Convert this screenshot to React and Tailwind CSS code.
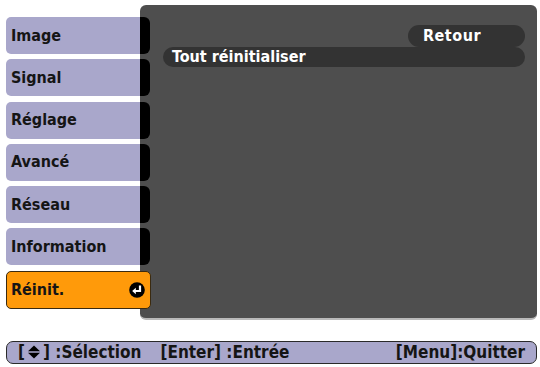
const tabs = ["Image", "Signal", "Réglage", "Avancé", "Réseau", "Information"];

function EnterIcon() {
  return (
    <svg width="16" height="16" viewBox="0 0 16 16">
      <circle cx="8" cy="8" r="7.8" fill="#000" />
      <path d="M11 3.5 V9 H6" stroke="#fff" strokeWidth="2.2" fill="none" />
      <path d="M3.2 9 L6.8 5.8 V12.2 Z" fill="#fff" />
    </svg>
  );
}

function UpDown() {
  return (
    <svg width="14" height="14" viewBox="0 0 14 14" className="inline-block mx-[2px] -mt-[2px]">
      <path d="M7 0.5 L13 6.3 H1 Z" fill="#000" />
      <path d="M1 7.7 H13 L7 13.5 Z" fill="#000" />
    </svg>
  );
}

export default function App() {
  return (
    <div className="w-[540px] h-[367px] bg-white font-['DejaVu_Sans_Condensed','DejaVu_Sans',sans-serif] font-stretch-condensed overflow-hidden">
      <div className="flex pt-[5px] pl-[6px] pr-[3px] h-[320px]">
        {/* Tabs */}
        <div className="w-[134px] shrink-0 pt-[12px] flex flex-col gap-[5.3px]">
          {tabs.map((t) => (
            <div
              key={t}
              className="h-[37px] bg-[#a9a7cb] rounded-l-[5px] flex items-center pl-[5px] text-[16px] font-bold text-[#151515]"
            >
              {t}
            </div>
          ))}
          <div className="relative z-10 w-[145px] h-[38px] bg-[#ff9a0a] border border-[#3a2a10] rounded-[5px] flex items-center justify-between pl-[4px] pr-[5px] text-[16px] font-bold text-[#151515]">
            Réinit.
            <EnterIcon />
          </div>
        </div>

        {/* Panel */}
        <div className="flex-1 flex bg-[#4e4e4e] rounded-[6px] border-b-2 border-[#b9b9b9] overflow-hidden">
          <div className="w-[10px] shrink-0 pt-[12px] flex flex-col gap-[5.3px]">
            {[...tabs, "x"].map((t) => (
              <div key={t} className="h-[37px] bg-black rounded-r-[6px]" />
            ))}
          </div>
          <div className="flex-1 pl-[13px] pr-[12px] pt-[20px] flex flex-col">
            <div className="self-end w-[117px] h-[22px] bg-[#333333] rounded-full flex items-center pl-[15px] text-white text-[16px] font-bold tracking-[0.5px]">
              Retour
            </div>
            <div className="h-[20px] bg-[#333333] rounded-full flex items-center pl-[9px] text-white text-[16px] font-bold">
              Tout réinitialiser
            </div>
          </div>
        </div>
      </div>

      {/* Bottom help bar */}
      <div className="mt-[21px] ml-[6px] mr-[3px] h-[23px] bg-[#a9a7cb] border border-[#2a2a2a] rounded-[7px] flex items-center pl-[11px] pr-[11px] text-[17px] font-bold text-[#151515]">
        <span>
          [<UpDown />] :Sélection
        </span>
        <span className="ml-[19px]">[Enter] :Entrée</span>
        <span className="ml-auto">[Menu]:Quitter</span>
      </div>
    </div>
  );
}
